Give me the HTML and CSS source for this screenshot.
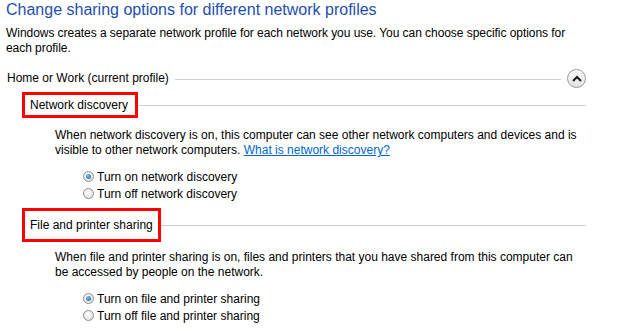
FILE: index.html
```html
<!DOCTYPE html>
<html lang="en">
<head>
  <meta charset="UTF-8" />
  <title>Advanced sharing settings</title>
  <link rel="stylesheet" href="styles.css">
</head>
<body>
  <h1 class="title">Change sharing options for different network profiles</h1>
  <p class="intro">Windows creates a separate network profile for each network you use. You can choose specific options for each profile.</p>

  <div class="profile-head">
    <span>Home or Work (current profile)</span>
    <span class="rule"></span>
    <button class="collapse" aria-label="Collapse">
      <svg width="10" height="7" viewBox="0 0 10 7"><path d="M1 6 L5 2 L9 6" fill="none" stroke="#222" stroke-width="2.2"/></svg>
    </button>
  </div>

  <div class="section">
    <div class="section-head">
      <span class="label">Network discovery</span>
      <span class="rule"></span>
    </div>
    <p class="desc">When network discovery is on, this computer can see other network computers and devices and is visible to other network computers. <a href="#">What is network discovery?</a></p>
    <ul class="options">
      <li><span class="radio checked"></span>Turn on network discovery</li>
      <li><span class="radio"></span>Turn off network discovery</li>
    </ul>
  </div>

  <div class="section">
    <div class="section-head">
      <span class="label label-tall">File and printer sharing</span>
      <span class="rule"></span>
    </div>
    <p class="desc">When file and printer sharing is on, files and printers that you have shared from this computer can be accessed by people on the network.</p>
    <ul class="options">
      <li><span class="radio checked"></span>Turn on file and printer sharing</li>
      <li><span class="radio"></span>Turn off file and printer sharing</li>
    </ul>
  </div>
</body>
</html>
```

FILE: styles.css
```css
body {
  margin: 0;
  padding: 0 0 0 6px;
  width: 580px;
  font-family: "Liberation Sans", Arial, sans-serif;
  font-size: 12px;
  color: #000;
  background: #fff;
}

.title {
  margin: 0;
  font-size: 16px;
  font-weight: normal;
  line-height: 20px;
  color: #1e4fae;
}

.intro {
  margin: 6px 0 0;
  line-height: 15px;
  letter-spacing: -0.05px;
}

.profile-head {
  display: flex;
  align-items: center;
  margin-top: 12px;
  padding-left: 1px;
  height: 20px;
}

.rule {
  flex: 1;
  height: 1px;
  background: #cfcfcf;
  margin-left: 6px;
  margin-top: 3px;
}

.collapse {
  width: 19px;
  height: 19px;
  margin-left: 6px;
  padding: 0;
  border: 1px solid #9a9a9a;
  border-radius: 50%;
  background: linear-gradient(#fdfdfd, #e2e2e2);
  display: flex;
  align-items: center;
  justify-content: center;
}

.section {
  padding-left: 16px;
}

.section-head {
  display: flex;
  align-items: center;
  margin-top: 4px;
}

.section-head .rule {
  margin-left: 0;
  margin-top: 0;
}

.label {
  border: 3px solid #ff0000;
  padding: 3px 7px 3px 5px;
  line-height: 14px;
}

.label-tall {
  padding: 7px 5px 7px 5px;
}

.desc {
  margin: 10px 0 0 33px;
  line-height: 15px;
}

.section + .section .desc {
  margin-top: 8px;
}

.desc a {
  color: #0066cc;
}

.options {
  list-style: none;
  margin: 10px 0 0 61px;
  padding: 0;
}

.options li {
  display: flex;
  align-items: center;
  height: 17px;
}

.radio {
  width: 11px;
  height: 11px;
  box-sizing: border-box;
  border: 1px solid #8f8f8f;
  border-radius: 50%;
  background: radial-gradient(circle at 40% 35%, #ffffff, #d8d8d8);
  margin-right: 3px;
  position: relative;
}

.radio.checked::after {
  content: "";
  position: absolute;
  left: 2px;
  top: 2px;
  width: 5px;
  height: 5px;
  border-radius: 50%;
  background: radial-gradient(circle at 40% 35%, #6cc4f2, #1b5c94);
}

.section + .section .section-head {
  margin-top: 6px;
}
```
